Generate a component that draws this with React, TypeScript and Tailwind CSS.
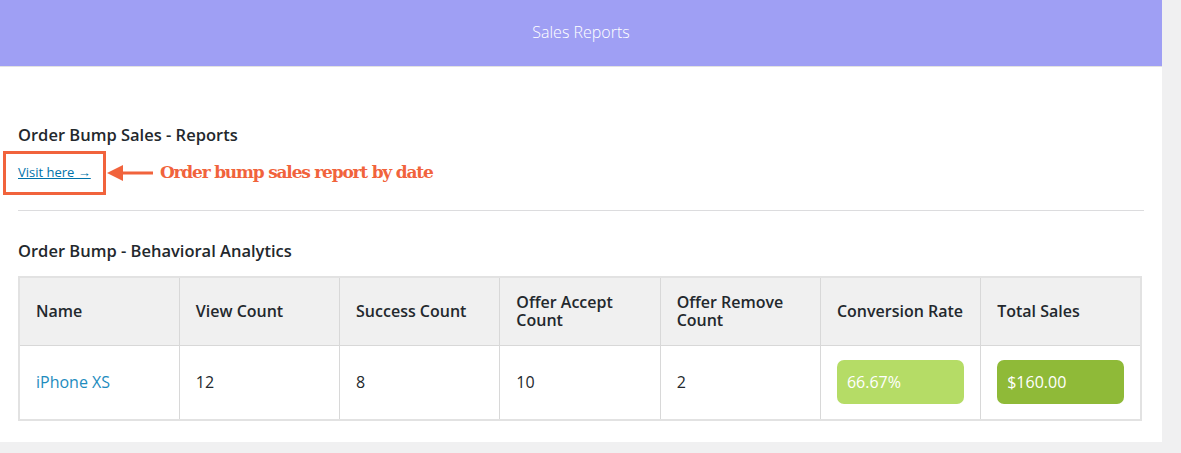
import React from "react";

const font = { fontFamily: '"Open Sans", "Noto Sans", sans-serif' };

const headers = ["Name", "View Count", "Success Count", "Offer Accept Count", "Offer Remove Count", "Conversion Rate", "Total Sales"];

export default function App() {
  return (
    <div className="flex h-[453px] w-[1181px] bg-[#f0f0f1] text-[#23282d]" style={font}>
      <div className="flex h-[442px] w-[1162px] flex-col bg-white">
        {/* Header bar */}
        <div className="flex h-[67px] items-center justify-center border-b border-[#e2e2e2] bg-[#9f9ff4] pb-[3px]">
          <span className="text-[16px] font-light text-white">Sales Reports</span>
        </div>

        <div className="px-[18px] pt-[58px]">
          <h2 className="text-[16.5px] font-semibold leading-5">Order Bump Sales - Reports</h2>

          <div className="mt-[6px] flex items-center">
            <div className="-ml-[15px] flex h-[44px] w-[103px] items-center border-[3px] border-[#f1633c] pl-[12px] pb-[1px]">
              <a href="#" className="text-[13px] text-[#0073aa] underline">
                Visit here →
              </a>
            </div>
            <svg width="46" height="18" viewBox="0 0 46 18" className="ml-[1px]">
              <polygon points="0,9 16,1 16,17" fill="#f1633c" />
              <rect x="14" y="7.5" width="32" height="3" fill="#f1633c" />
            </svg>
            <span
              className="ml-[7px] text-[17px] font-bold text-[#f1633c]"
              style={{ fontFamily: '"DejaVu Serif", serif', letterSpacing: "-1.2px" }}
            >
              Order bump sales report by date
            </span>
          </div>

          <div className="mt-[15px] h-px bg-[#dcdcde]" />

          <h2 className="mt-[30px] text-[16.5px] font-semibold leading-5">Order Bump - Behavioral Analytics</h2>

          <table className="mt-[15px] w-[1124px] table-fixed border-collapse border-2 border-[#e2e2e2]">
            <thead>
              <tr className="h-[68px] bg-[#f0f0f0]">
                {headers.map((h) => (
                  <th
                    key={h}
                    className="border border-[#d8d8d8] px-4 text-left align-middle text-[16px] font-semibold leading-[18px]"
                  >
                    {h}
                  </th>
                ))}
              </tr>
            </thead>
            <tbody>
              <tr className="h-[75px] text-[16px]">
                <td className="border border-[#d8d8d8] px-4 text-[#1e8cbe]">iPhone XS</td>
                <td className="border border-[#d8d8d8] px-4">12</td>
                <td className="border border-[#d8d8d8] px-4">8</td>
                <td className="border border-[#d8d8d8] px-4">10</td>
                <td className="border border-[#d8d8d8] px-4">2</td>
                <td className="border border-[#d8d8d8] px-4">
                  <div className="flex h-[44px] items-center rounded-[7px] bg-[#b5dc66] px-[10px] text-white">66.67%</div>
                </td>
                <td className="border border-[#d8d8d8] px-4">
                  <div className="flex h-[44px] items-center rounded-[7px] bg-[#8fba38] px-[10px] text-white">$160.00</div>
                </td>
              </tr>
            </tbody>
          </table>
        </div>
      </div>
    </div>
  );
}
